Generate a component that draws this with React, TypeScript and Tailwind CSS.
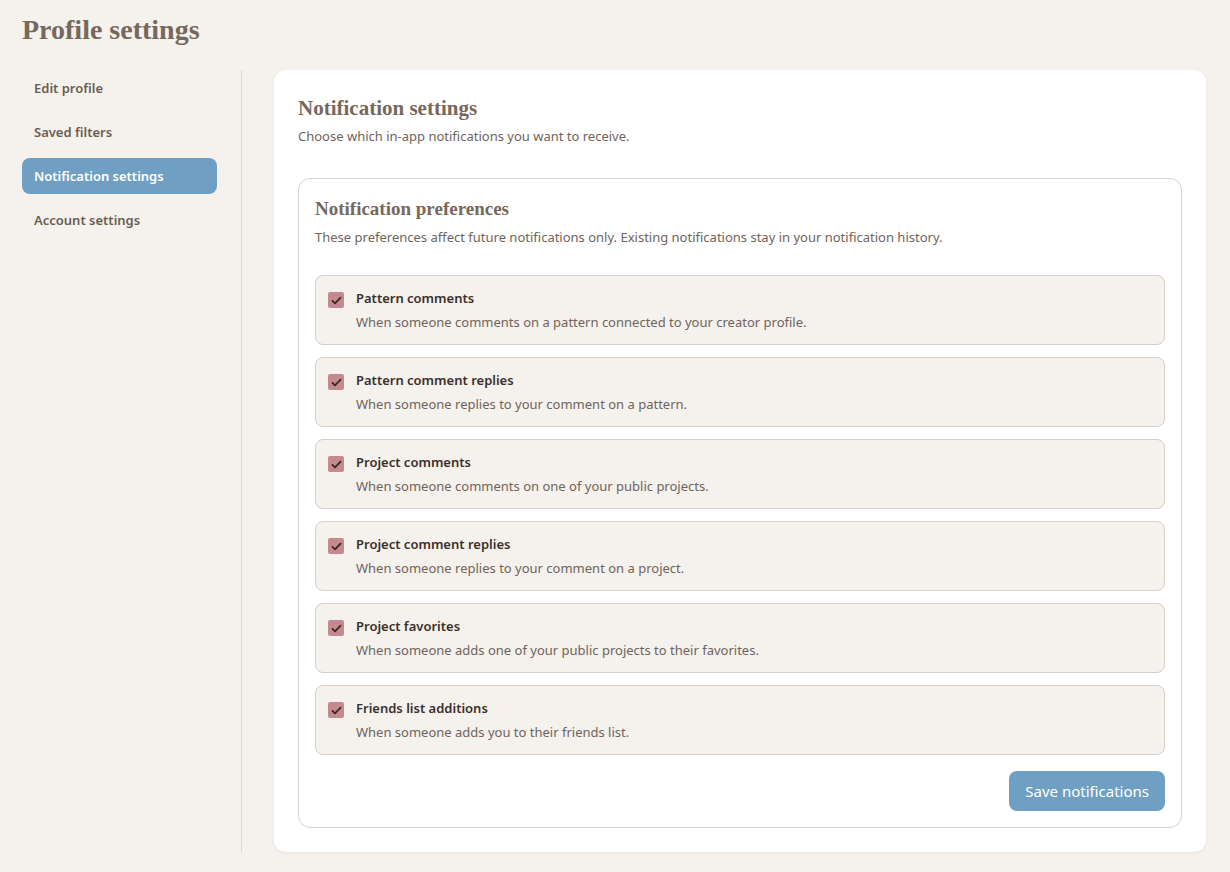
import React, { useState } from 'react';

interface Preference {
  id: string;
  title: string;
  description: string;
}

const preferences: Preference[] = [
  { id: 'pattern_comments', title: 'Pattern comments', description: 'When someone comments on a pattern connected to your creator profile.' },
  { id: 'pattern_replies', title: 'Pattern comment replies', description: 'When someone replies to your comment on a pattern.' },
  { id: 'project_comments', title: 'Project comments', description: 'When someone comments on one of your public projects.' },
  { id: 'project_replies', title: 'Project comment replies', description: 'When someone replies to your comment on a project.' },
  { id: 'project_favorites', title: 'Project favorites', description: 'When someone adds one of your public projects to their favorites.' },
  { id: 'friends', title: 'Friends list additions', description: 'When someone adds you to their friends list.' },
];

const navItems = ['Edit profile', 'Saved filters', 'Notification settings', 'Account settings'];

const serif = "font-['Liberation_Serif','DejaVu_Serif',serif]";

export default function App() {
  const [active, setActive] = useState('Notification settings');
  const [checked, setChecked] = useState<Record<string, boolean>>(
    Object.fromEntries(preferences.map((p) => [p.id, true]))
  );

  return (
    <div className="min-h-screen bg-[#f5f1ed] font-['Noto_Sans','Open_Sans',sans-serif] text-[#3d332c]">
      <div className="pl-[22px] pr-[24px] pt-[12px] pb-[20px]">
        <h1 className={`${serif} text-[28px] font-bold leading-[36px] text-[#77685c]`}>Profile settings</h1>

        <div className="mt-[22px] flex">
          <nav className="w-[220px] shrink-0 border-r border-[#ddd7d1] pr-[24px] min-h-[782px]">
            <ul className="flex flex-col gap-[8px]">
              {navItems.map((item) => (
                <li key={item}>
                  <button
                    onClick={() => setActive(item)}
                    className={`w-full h-[36px] rounded-lg px-[12px] pt-[2px] text-left text-[13px] font-semibold ${
                      active === item ? 'bg-[#6f9fc2] text-white' : 'text-[#6b5d52]'
                    }`}
                  >
                    {item}
                  </button>
                </li>
              ))}
            </ul>
          </nav>

          <main className="ml-[32px] flex-1 rounded-xl bg-white px-[24px] pt-[24px] pb-[24px] shadow-[0_1px_3px_rgba(80,60,40,0.08)]">
            <h2 className={`${serif} text-[21px] font-bold leading-[28px] text-[#77685c]`}>Notification settings</h2>
            <p className="mt-[5px] text-[13px] text-[#6f645c]">Choose which in-app notifications you want to receive.</p>

            <section className="mt-[31px] rounded-xl border border-[#d9d3ce] px-[16px] pt-[17px] pb-[16px]">
              <h3 className={`${serif} text-[19px] font-bold leading-[26px] text-[#77685c]`}>Notification preferences</h3>
              <p className="mt-[6px] text-[13px] text-[#6f645c]">
                These preferences affect future notifications only. Existing notifications stay in your notification history.
              </p>

              <div className="mt-[28px] flex flex-col gap-[12px]">
                {preferences.map((p) => (
                  <label
                    key={p.id}
                    className="flex h-[70px] cursor-pointer items-start gap-[12px] rounded-lg border border-[#d6d0ca] bg-[#f5f1ed] px-[12px] pt-[13px]"
                  >
                    <input
                      type="checkbox"
                      className="sr-only"
                      checked={checked[p.id]}
                      onChange={() => setChecked({ ...checked, [p.id]: !checked[p.id] })}
                    />
                    <span className="mt-[3px] flex h-[16px] w-[16px] shrink-0 items-center justify-center rounded-[2px] bg-[#c58990]">
                      {checked[p.id] && (
                        <svg viewBox="0 0 16 16" className="h-[13px] w-[13px]" fill="none">
                          <path d="M3 8.5l3.2 3L13 4.5" stroke="#3a2626" strokeWidth="2.2" strokeLinecap="round" strokeLinejoin="round" />
                        </svg>
                      )}
                    </span>
                    <span className="flex flex-col">
                      <span className="text-[13px] font-semibold leading-[18px] text-[#3a302a]">{p.title}</span>
                      <span className="mt-[6px] text-[13px] leading-[18px] text-[#6f645c]">{p.description}</span>
                    </span>
                  </label>
                ))}
              </div>

              <div className="mt-[16px] flex justify-end">
                <button className="h-[40px] rounded-lg bg-[#6f9fc2] px-[16px] text-[15px] text-white">Save notifications</button>
              </div>
            </section>
          </main>
        </div>
      </div>
    </div>
  );
}
